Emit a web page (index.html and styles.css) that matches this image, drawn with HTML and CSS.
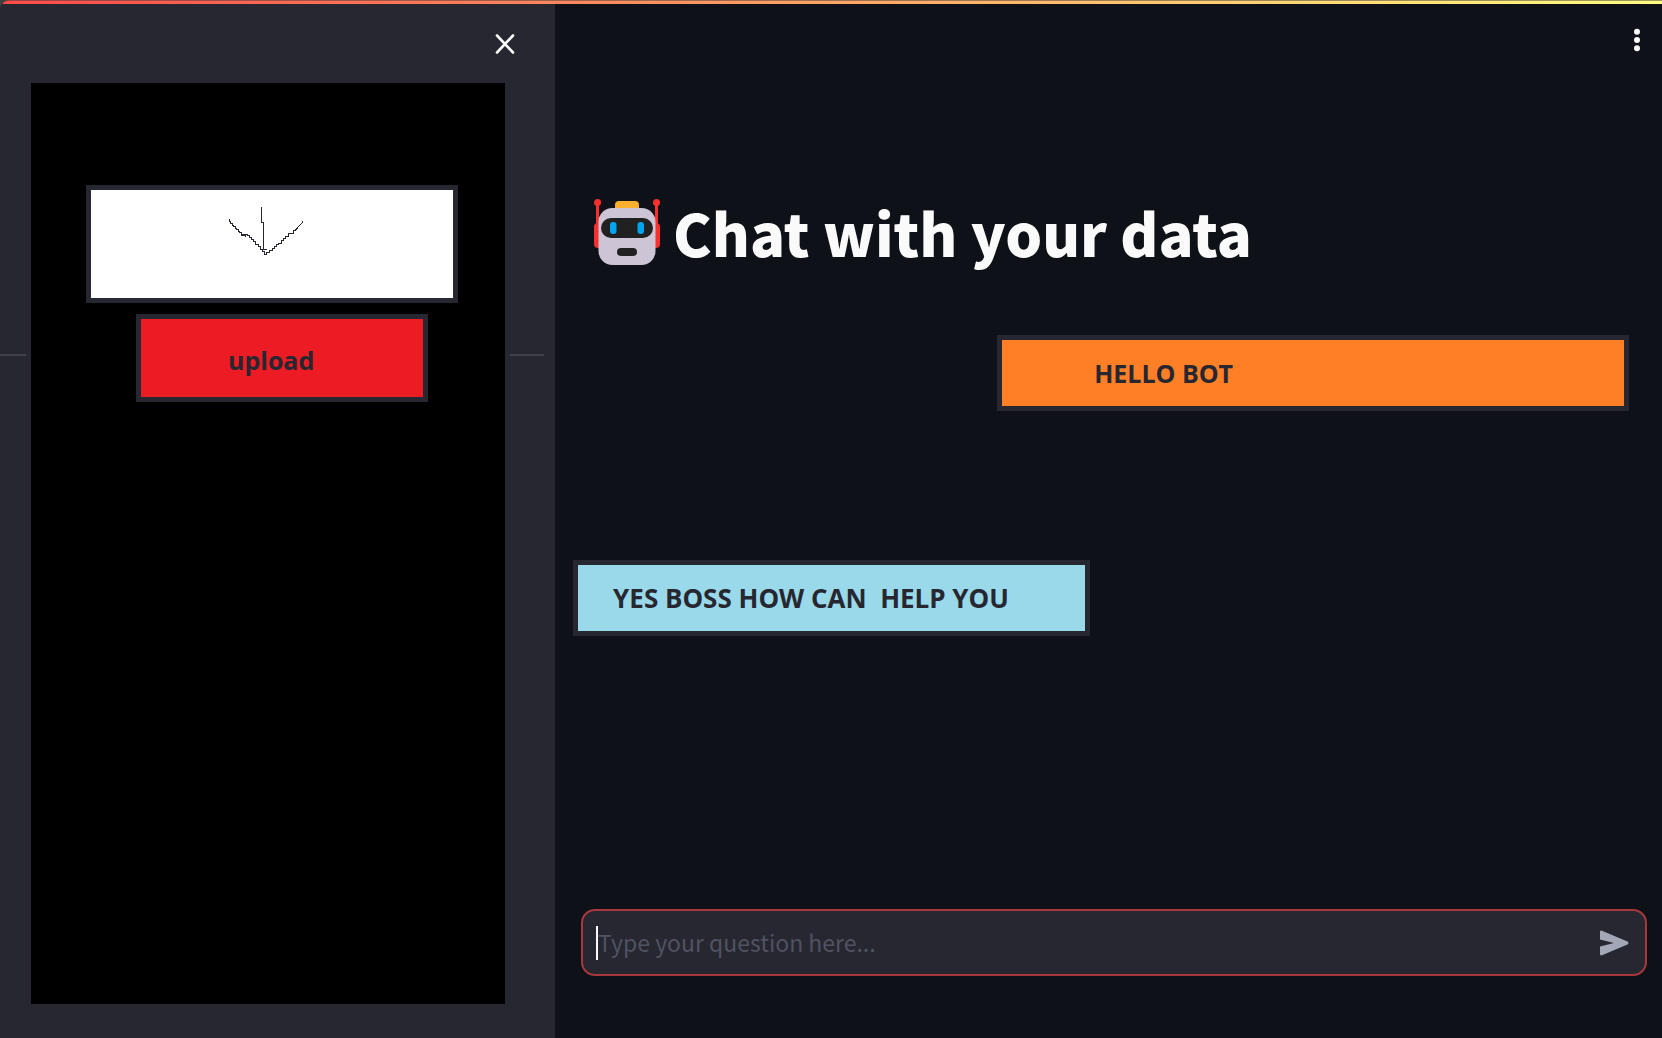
FILE: index.html
```html
<!DOCTYPE html>
<html lang="en">
<head>
<meta charset="utf-8">
<meta name="viewport" content="width=device-width, initial-scale=1">
<title>Chat with your data</title>
<link rel="stylesheet" href="styles.css">
</head>
<body>
<div class="app">
  <div class="topbar"></div>
  <div class="columns">
    <aside class="sidebar">
      <div class="sidebar-head">
        <button class="icon-button" type="button" aria-label="Close sidebar">
          <svg width="20" height="20" viewBox="0 0 20 20" fill="none" stroke="#fafafa" stroke-width="2.6" stroke-linecap="round"><path d="M2 1.500L18 18.500M18 1.500L2 18.500"/></svg>
        </button>
      </div>
      <div class="sidebar-body">
        <hr class="divider">
        <div class="panel">
          <button class="box dropzone" type="button" aria-label="Choose a file">
            <svg width="74" height="49" viewBox="477 109 222 147" fill="none" stroke="#262730" stroke-width="3" shape-rendering="crispEdges"><path d="M478 148V154H481V162H487V168H490V171H496V177H499V180H505V186H508V189H514V198H526V203M514 194H532V198H538V204H544V210H550V216H556V225H565V231H571V240H577V246H583V254H590V249H598V242H607V237H612V231H618V225H624V221H633V212H639V207H645V201H654V192H669V183H675L699 156M574 111V159H580V239H590"/></svg>
          </button>
          <button class="box upload" type="button">upload</button>
        </div>
      </div>
    </aside>
    <main class="chat">
      <header class="toolbar">
        <button class="icon-button" type="button" aria-label="Menu">
          <svg width="6" height="24" viewBox="0 0 6 24" fill="#fafafa"><circle cx="3" cy="3.8" r="3"/><circle cx="3" cy="12" r="3"/><circle cx="3" cy="20.2" r="3"/></svg>
        </button>
      </header>
      <h1 class="title">
        <svg class="robot" width="66" height="66" viewBox="0 0 66 66" aria-hidden="true">
          <path fill="#f92f2f" d="M2 6h3v20H2zM61 6h3v20h-3z"/>
          <circle cx="3.5" cy="3.5" r="3.5" fill="#f92f2f"/><circle cx="62.5" cy="3.5" r="3.5" fill="#f92f2f"/>
          <rect x="0" y="24" width="10" height="25" rx="4" fill="#f92f2f"/><rect x="56" y="24" width="10" height="25" rx="4" fill="#f92f2f"/>
          <rect x="21" y="2" width="24" height="12" rx="4" fill="#ffb02e"/>
          <rect x="4.500" y="9" width="57" height="57" rx="14" fill="#cdc4d6"/>
          <rect x="7" y="19" width="52" height="20" rx="10" fill="#212121"/>
          <rect x="16" y="23" width="6.500" height="12" rx="3" fill="#00a6ed"/><rect x="43.500" y="23" width="6.500" height="12" rx="3" fill="#00a6ed"/>
          <rect x="23" y="49" width="20" height="8" rx="4" fill="#212121"/>
        </svg>
        <span>Chat with your data</span>
      </h1>
      <section class="messages">
        <p class="box message user">HELLO BOT</p>
        <p class="box message bot">YES BOSS HOW CAN  HELP YOU</p>
      </section>
      <form class="composer">
        <span class="caret"></span>
        <input class="question" type="text" placeholder="Type your question here..." aria-label="Your question">
        <button class="icon-button" type="button" aria-label="Send">
          <svg width="30" height="26" viewBox="0 0 30 26" fill="#a3a8b8"><path d="M1 2Q1 0 3 .7L28.500 11.600Q30.500 13 28.500 14.400L3 25.300Q1 26 1 24V16.500L15 13L1 9.500Z"/></svg>
        </button>
      </form>
    </main>
  </div>
</div>
</body>
</html>
```
FILE: styles.css
```css
* {
  box-sizing: border-box;
}

body {
  margin: 0;
  background: #3f4040;
  font-family: "Open Sans", "Noto Sans", sans-serif;
}

.app {
  display: flex;
  flex-direction: column;
  min-height: 100vh;
  overflow: hidden;
  border-top-left-radius: 10px;
  background: #0e1117;
}

.topbar {
  height: 4px;
  border-top: 1px solid rgba(60, 60, 60, 0.5);
  background: linear-gradient(90deg, #ff4b4b, #fffd80) border-box;
}

.columns {
  display: flex;
  flex: 1;
}

.sidebar {
  display: flex;
  flex-direction: column;
  width: 33.4%;
  padding-bottom: 34px;
  background: #262730;
}

.sidebar-head {
  display: flex;
  align-items: center;
  justify-content: flex-end;
  height: 79px;
  padding-right: 40px;
}

.icon-button {
  display: flex;
  padding: 0;
  border: 0;
  background: none;
}

.sidebar-body {
  display: grid;
  flex: 1;
}

.divider {
  grid-area: 1 / 1;
  width: auto;
  height: 2px;
  margin: 271px 11px 0 0;
  border: 0;
  background: #3f4049;
  align-self: start;
  justify-self: stretch;
}

.panel {
  z-index: 1;
  grid-area: 1 / 1;
  display: flex;
  flex-direction: column;
  gap: 11px;
  margin: 0 50px 0 31px;
  padding: 102px 47px 0 55px;
  outline: 5px solid #262730;
  background: #000;
}

.box {
  border: 5px solid #262730;
  color: #262730;
  font-family: inherit;
  font-size: 25px;
  font-weight: 700;
  line-height: 36px;
  text-align: left;
}

.dropzone {
  height: 118px;
  padding: 0 0 28px 138px;
  background: #fff;
}

.dropzone svg {
  display: block;
}

.upload {
  height: 88px;
  margin: 0 30px 0 50px;
  padding: 4px 0 0 87px;
  background: #ed1c24;
}

.chat {
  display: flex;
  flex: 1;
  flex-direction: column;
  padding: 0 15px 62px 26px;
}

.toolbar {
  display: flex;
  align-items: center;
  justify-content: flex-end;
  height: 72px;
  padding-right: 7px;
}

.title {
  display: flex;
  align-items: center;
  gap: 13px;
  height: 90px;
  margin: 111px 13px 0;
  color: #fafafa;
  font-family: "Noto Sans CJK SC", sans-serif;
  font-size: 58px;
  font-weight: 900;
  line-height: 88px;
}

.messages {
  display: flex;
  flex: 1;
  flex-direction: column;
  gap: 149px;
  padding: 58px 18px 24px 0;
}

.message {
  height: 76px;
  margin: 0;
  padding: 15px 0;
  white-space: pre;
}

.user {
  align-self: flex-end;
  width: 60.3%;
  padding-left: 92px;
  background: #ff7f27;
}

.bot {
  width: 49.3%;
  margin-left: -8px;
  padding-left: 35px;
  background: #99d9ea;
  font-size: 26px;
}

.composer {
  display: flex;
  align-items: center;
  height: 67px;
  padding: 0 16px 0 13px;
  border: 2px solid #a9383d;
  border-radius: 14px;
  background: #262730;
}

.caret {
  width: 2px;
  height: 34px;
  background: #fafafa;
}

.question {
  flex: 1;
  min-width: 0;
  padding: 0 0 2px;
  border: 0;
  outline: 0;
  background: none;
  color: #fafafa;
  font-family: "Noto Sans CJK SC", sans-serif;
  font-size: 23px;
}

.question::placeholder {
  color: #505261;
}
```
